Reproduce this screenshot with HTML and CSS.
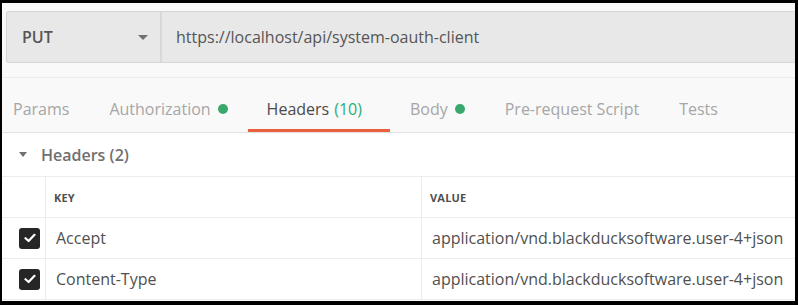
FILE: index.html
```html
<!DOCTYPE html>
<html lang="en">
<head>
    <meta charset="UTF-8">
    <title>Request Headers</title>
    <link rel="stylesheet" href="styles.css">
</head>
<body>
    <div class="frame">
        <div class="request">
            <div class="request-bar">
                <div class="method">
                    <span>PUT</span>
                    <span class="caret"></span>
                </div>
                <div class="url">https://localhost/api/system-oauth-client</div>
            </div>
        </div>
        <div class="tabs">
            <div class="tab">Params</div>
            <div class="tab">Authorization <span class="dot"></span></div>
            <div class="tab active">Headers <span class="count">(10)</span></div>
            <div class="tab">Body <span class="dot"></span></div>
            <div class="tab">Pre-request Script</div>
            <div class="tab">Tests</div>
        </div>
        <div class="section-title">
            <span class="caret small"></span>
            Headers (2)
        </div>
        <div class="table">
            <div class="row head">
                <div class="cell check"></div>
                <div class="cell key">KEY</div>
                <div class="cell value">VALUE</div>
            </div>
            <div class="row">
                <div class="cell check">
                    <span class="box">
                        <svg width="12" height="10" viewBox="0 0 12 10"><path d="M1.5 5.2 L4.6 8 L10.5 1.8" fill="none" stroke="#fff" stroke-width="2.2" stroke-linecap="round" stroke-linejoin="round"/></svg>
                    </span>
                </div>
                <div class="cell key">Accept</div>
                <div class="cell value">application/vnd.blackducksoftware.user-4+json</div>
            </div>
            <div class="row">
                <div class="cell check">
                    <span class="box">
                        <svg width="12" height="10" viewBox="0 0 12 10"><path d="M1.5 5.2 L4.6 8 L10.5 1.8" fill="none" stroke="#fff" stroke-width="2.2" stroke-linecap="round" stroke-linejoin="round"/></svg>
                    </span>
                </div>
                <div class="cell key">Content-Type</div>
                <div class="cell value">application/vnd.blackducksoftware.user-4+json</div>
            </div>
        </div>
    </div>
</body>
</html>
```

FILE: styles.css
```css
* {
    box-sizing: border-box;
}
body {
    margin: 0;
    font-family: "Open Sans", "Noto Sans", sans-serif;
    color: #505050;
}
.frame {
    width: 798px;
    height: 305px;
    border-style: solid;
    border-color: #000;
    border-width: 3px 3px 4px 2px;
    background: #fff;
    overflow: hidden;
}
.request {
    background: #f9f9f9;
    padding: 8px 0 14px 4px;
    border-bottom: 1px solid #ececec;
}
.request-bar {
    display: flex;
    height: 52px;
    background: #e8e8e8;
    border: 1px solid #d6d6d6;
    border-right: none;
    border-radius: 3px 0 0 3px;
    font-size: 16px;
}
.method {
    width: 155px;
    display: flex;
    align-items: center;
    justify-content: space-between;
    padding: 0 12px 0 15px;
    border-right: 2px solid #d8d8d8;
    font-weight: 600;
    color: #555;
}
.caret {
    width: 0;
    height: 0;
    border-left: 5px solid transparent;
    border-right: 5px solid transparent;
    border-top: 5px solid #707070;
}
.caret.small {
    border-left-width: 4px;
    border-right-width: 4px;
    border-top-width: 5px;
    margin-right: 14px;
}
.url {
    display: flex;
    align-items: center;
    padding-left: 14px;
    color: #555;
}
.tabs {
    display: flex;
    height: 55px;
    padding: 8px 0 0 11px;
    background: #f9f9f9;
    border-bottom: 1px solid #e2e2e2;
    font-size: 16px;
    color: #a6a6a6;
}
.tab {
    display: flex;
    align-items: center;
    padding: 0 20px;
    position: relative;
}
.tab:first-child {
    padding-left: 0;
}
.tab.active {
    color: #4a4a4a;
    padding: 0 28px 0 19px;
}
.tab.active::after {
    content: "";
    position: absolute;
    left: 0;
    right: 0;
    bottom: 0;
    height: 3px;
    background: #e8603c;
}
.count {
    color: #26b07a;
    margin-left: 5px;
}
.dot {
    display: inline-block;
    width: 10px;
    height: 10px;
    border-radius: 50%;
    background: #3aa76d;
    margin-left: 7px;
}
.section-title {
    display: flex;
    align-items: center;
    height: 44px;
    padding-left: 17px;
    font-size: 16px;
    font-weight: 600;
    color: #707070;
    border-bottom: 1px solid #ececec;
}
.row {
    display: flex;
    height: 41px;
    border-bottom: 1px solid #ececec;
}
.cell {
    display: flex;
    align-items: center;
}
.check {
    width: 44px;
    border-right: 1px solid #ececec;
    padding-left: 17px;
}
.key {
    width: 376px;
    border-right: 1px solid #ececec;
    padding-left: 10px;
    font-size: 16px;
}
.value {
    flex: 1;
    padding-left: 10px;
    font-size: 16px;
}
.head .key,
.head .value {
    font-size: 11px;
    font-weight: 700;
    letter-spacing: 0.2px;
    padding-left: 8px;
}
.box {
    width: 21px;
    height: 21px;
    border-radius: 3px;
    background: #262626;
    display: flex;
    align-items: center;
    justify-content: center;
}
```
